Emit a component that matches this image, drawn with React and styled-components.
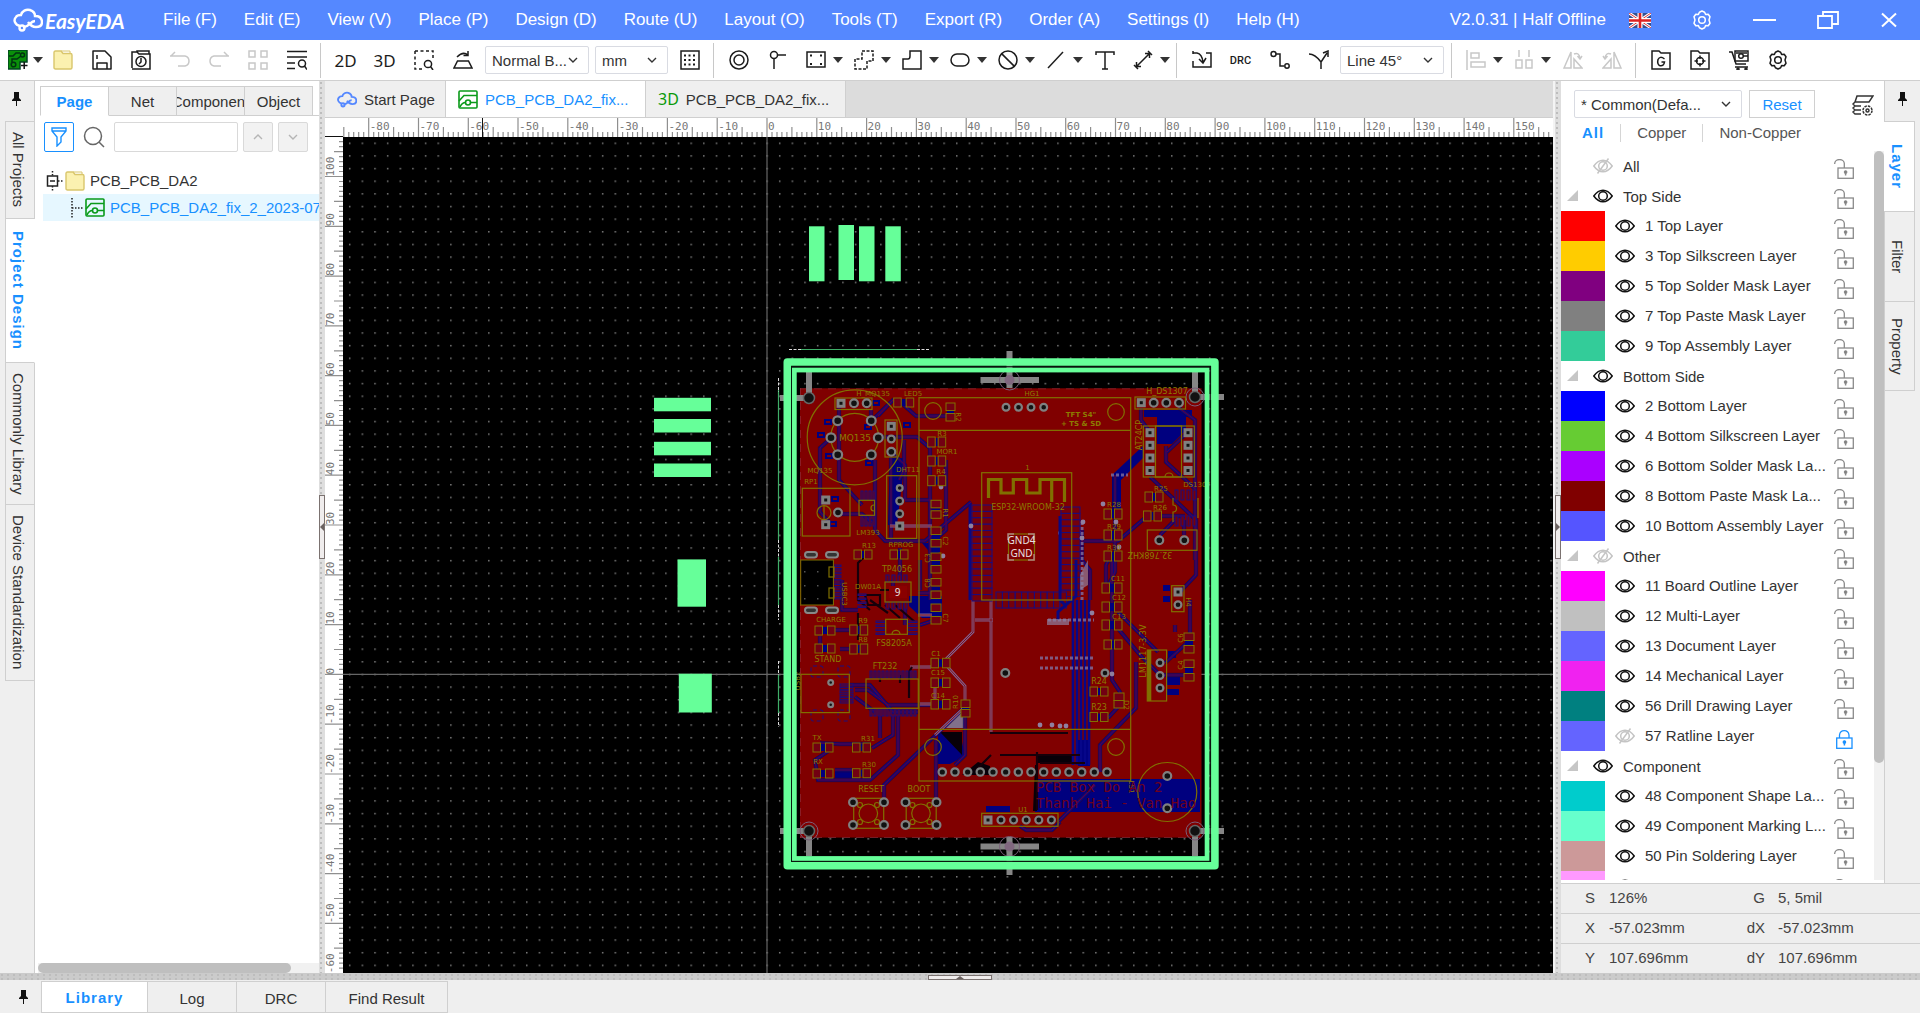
import React, { useLayoutEffect, useRef, useState } from "react";
import styled, { createGlobalStyle, css } from "styled-components";

const Global = createGlobalStyle`
  *, *::before, *::after { box-sizing: border-box; }
  body { margin: 0; overflow: hidden; background: #efefef; }
  body, button, input, select { font-family: "Liberation Sans", Arial, sans-serif; font-size: 15px; color: #333; }
  button { border: 0; padding: 0; background: none; }
  ul { list-style: none; margin: 0; padding: 0; }
`;

const blue = "#1890ff";
const line = "#cfcfcf";

/* ---------- shell ---------- */

const Shell = styled.div`
  display: grid;
  grid-template-rows: 40px 41px minmax(0, 1fr) 7px 33px;
  height: 100vh;
  background: #efefef;
`;

/* ---------- title bar ---------- */

const TitleBar = styled.header`
  display: flex;
  align-items: center;
  padding: 0 22px 0 13px;
  background: #5588ff;
  color: #fff;
`;

const Logo = styled.div`
  display: flex;
  align-items: center;
  gap: 2px;
  width: 137px;
  font: italic 700 21px Lato, sans-serif;
`;

const MenuNav = styled.nav`
  display: flex;
  flex: 1;
  gap: 1px;
`;

const MenuButton = styled.button`
  padding: 0 13px;
  color: #fff;
  font-size: 17px;
  line-height: 24px;
  white-space: nowrap;
`;

const Version = styled.span`
  font-size: 17px;
  white-space: nowrap;
`;

const WindowButtons = styled.div`
  display: flex;
  align-items: center;
  margin-left: 23px;
  gap: 41px;
`;

const WindowButton = styled.button`
  display: flex;
  color: #fff;
`;

/* ---------- toolbar ---------- */

const Toolbar = styled.div`
  display: flex;
  align-items: center;
  background: #fff;
  border-bottom: 1px solid ${line};
`;

const Tool = styled.button`
  display: flex;
  flex: none;
  align-items: center;
  justify-content: ${(p) => (p.$menu ? "flex-start" : "center")};
  gap: ${(p) => (p.$lead ? 5 : 7)}px;
  width: ${(p) => (p.$lead ? 43 : p.$menu ? 48 : 39)}px;
  height: 38px;
  padding-left: ${(p) => (p.$lead ? 8 : p.$menu ? 9 : 0)}px;
  color: ${(p) => (p.$off ? "#c8c8c8" : "#1c1c1c")};
`;

const ViewLabel = styled.span`
  font: 17px "Noto Sans", sans-serif;
`;

const CheckLabel = styled.span`
  font: 500 11px Roboto, sans-serif;
`;

const Divider = styled.span`
  flex: none;
  width: 1px;
  height: 35px;
  margin: 0 5px 0 4px;
  background: #c8c8c8;
`;

const SelectBox = styled.label`
  position: relative;
  display: flex;
  flex: none;
  align-items: center;
  width: ${(p) => p.$w}px;
  height: 28px;
  margin: 0 ${(p) => p.$gap || 0}px 0 ${(p) => p.$before || 0}px;
  border: 1px solid #d9dbe2;
  border-radius: 2px;
  background: #fff;
  select {
    width: 100%;
    height: 26px;
    padding: 0 20px 0 6px;
    border: 0;
    appearance: none;
    background: transparent;
  }
  svg {
    position: absolute;
    right: 10px;
    pointer-events: none;
  }
`;

/* ---------- workspace ---------- */

const Workspace = styled.main`
  display: grid;
  grid-template-columns: 35px 284px 6px minmax(0, 1fr) 8px 359px;
  min-height: 0;
`;

const SideStrip = styled.aside`
  display: flex;
  flex-direction: column;
  padding-left: ${(p) => (p.$right ? 0 : 5)}px;
  padding-right: ${(p) => (p.$right ? 5 : 0)}px;
  background: #efefef;
  border-right: ${(p) => (p.$right ? 0 : 1)}px solid ${line};
  border-left: ${(p) => (p.$right ? 1 : 0)}px solid ${line};
`;

const PinButton = styled.button`
  display: flex;
  align-items: center;
  justify-content: center;
  height: 40px;
  padding: ${(p) => (p.$right ? "0 0 4px 4px" : "0 6px 4px 0")};
`;

const SideTab = styled.button`
  writing-mode: vertical-rl;
  width: 30px;
  height: ${(p) => p.$h}px;
  padding-right: 4px;
  border: 1px solid ${line};
  border-top-width: ${(p) => (p.$first ? 1 : 0)}px;
  color: #333;
  ${(p) => p.$right && css`border-left: 0;`}
  ${(p) => p.$active && css`
    background: #fff;
    color: ${blue};
    font-weight: 700;
    letter-spacing: 1px;
    border-right-color: ${p.$right ? line : "#fff"};
    width: ${p.$right ? 31 : 30}px;
    margin-left: ${p.$right ? -1 : 0}px;
  `}
`;

const Panel = styled.section`
  display: flex;
  flex-direction: column;
  min-width: 0;
  min-height: 0;
  background: #fff;
`;

const PanelTabs = styled.div`
  display: flex;
  height: 30px;
  margin: 5px 0 0 5px;
  &::after { content: ""; flex: 1; border-bottom: 1px solid ${line}; }
`;

const PanelTab = styled.button`
  display: flex;
  align-items: center;
  justify-content: center;
  flex: none;
  width: ${(p) => (p.$active ? 69 : 68)}px;
  overflow: hidden;
  border: 1px solid ${line};
  border-left-width: ${(p) => (p.$active ? 1 : 0)}px;
  background: ${(p) => (p.$active ? "#fff" : "#efefef")};
  border-bottom-color: ${(p) => (p.$active ? "#fff" : line)};
  color: ${(p) => (p.$active ? blue : "#333")};
  font-weight: ${(p) => (p.$active ? 700 : 400)};
`;

const SearchRow = styled.div`
  display: flex;
  align-items: center;
  gap: 5px;
  padding: 6px 11px 0 9px;
`;

const SquareButton = styled.button`
  display: flex;
  align-items: center;
  justify-content: center;
  width: 30px;
  height: 30px;
  border: 1px solid ${(p) => (p.$on ? blue : "#d9d9d9")};
  border-radius: 2px;
  background: ${(p) => (p.$on ? "#fff" : "#f2f2f2")};
  color: ${(p) => (p.$on ? blue : "#b5b5b5")};
`;

const SearchLabel = styled.label`
  display: flex;
  flex: 1;
  min-width: 0;
  align-items: center;
  gap: 9px;
  padding-left: 4px;
  input {
    flex: 1;
    min-width: 0;
    height: 30px;
    border: 1px solid #d9d9d9;
    border-radius: 2px;
  }
`;

const Tree = styled.ul`
  flex: 1;
  margin: 15px 0 0 8px;
`;

const TreeRow = styled.li`
  display: flex;
  align-items: center;
  gap: 5px;
  height: 27px;
  padding-left: ${(p) => (p.$child ? 15 : 1)}px;
  overflow: hidden;
  white-space: nowrap;
  background: ${(p) => (p.$child ? "#e6f7ff" : "transparent")};
  color: ${(p) => (p.$child ? blue : "#333")};
  svg { flex: none; }
  svg:first-child { margin-right: -4px; }
`;

const HScroll = styled.div`
  height: 10px;
  margin-left: 3px;
  background: #f1f1f1;
  &::before {
    content: "";
    display: block;
    width: 90%;
    height: 10px;
    border-radius: 5px;
    background: #bfbfbf;
  }
`;

const Splitter = styled.div`
  display: flex;
  flex-direction: ${(p) => (p.$row ? "row" : "column")};
  align-items: flex-end;
  justify-content: center;
  border-left: ${(p) => (p.$edge ? 2 : 0)}px solid #f4f4f4;
  background: radial-gradient(circle at 2px 2px, #bdbdbd 1px, transparent 1px) 0 0 / ${(p) => (p.$row ? "6px 4px" : "8px 5px")} ${(p) => (p.$row ? "#cbcbcb" : "#dedede")};
`;

const Grip = styled.button`
  display: flex;
  align-items: center;
  justify-content: center;
  width: ${(p) => (p.$row ? 64 : 6)}px;
  height: ${(p) => (p.$row ? 5 : 64)}px;
  border: 1px solid #7b7270;
  background: #f0eded;
  color: #6b6260;
`;

/* ---------- documents ---------- */

const DocArea = styled.section`
  display: grid;
  grid-template-rows: 37px 19px minmax(0, 1fr);
  min-width: 0;
  min-height: 0;
  background: #fff;
`;

const DocTabs = styled.div`
  display: flex;
  background: #dcdcdc;
  border-bottom: 1px solid ${line};
`;

const DocTab = styled.button`
  display: flex;
  align-items: center;
  gap: 7px;
  width: ${(p) => p.$w}px;
  padding-left: 12px;
  border-right: 1px solid ${line};
  background: ${(p) => (p.$active ? "#fff" : "#efefef")};
  color: ${(p) => (p.$active ? blue : "#333")};
  white-space: nowrap;
`;

const GreenTag = styled.span`
  color: #0a9a0a;
  font: 16px "Noto Sans", sans-serif;
`;

const RulerSvg = styled.svg`
  display: block;
  width: 100%;
  height: 100%;
  min-width: 0;
  overflow: hidden;
  text { font: 11px "DejaVu Sans Mono", monospace; fill: #777; }
`;

const CanvasRow = styled.div`
  display: grid;
  grid-template-columns: 18px minmax(0, 1fr);
  min-height: 0;
`;

const Board = styled.svg`
  display: block;
  width: 100%;
  height: 100%;
  background: #000;
`;

/* ---------- layer manager ---------- */

const RightColumn = styled.div`
  display: grid;
  grid-template-columns: minmax(0, 1fr) 36px;
  grid-template-rows: minmax(0, 1fr) auto;
  min-height: 0;
`;

const PresetRow = styled.div`
  display: flex;
  align-items: center;
  padding: 9px 10px 0 13px;
`;

const ResetButton = styled.button`
  width: 66px;
  height: 28px;
  border: 1px solid #d0d0d0;
  color: ${blue};
`;

const ManagerButton = styled.button`
  display: flex;
  margin: 4px 0 0 auto;
`;

const FilterRow = styled.div`
  display: flex;
  align-items: center;
  height: 33px;
  padding: 0 0 3px 5px;
`;

const FilterButton = styled.button`
  padding: 0 16px;
  line-height: 18px;
  color: ${(p) => (p.$active ? blue : "#555")};
  font-weight: ${(p) => (p.$active ? 700 : 400)};
  letter-spacing: ${(p) => (p.$active ? "1px" : "normal")};
  & + & { border-left: 1px solid #d5d5d5; }
`;

const LayerScroll = styled.div`
  display: grid;
  grid-template-columns: minmax(0, 1fr) 10px;
  flex: 1;
  min-height: 0;
  margin-bottom: 3px;
  overflow: hidden;
`;

const LayerTrack = styled.div`
  background: #f1f1f1;
`;

const LayerThumb = styled.div`
  height: 84%;
  border-radius: 5px;
  background: #bfbfbf;
`;

const LayerList = styled.ul`
  min-height: 0;
`;

const LayerRow = styled.li`
  display: flex;
  align-items: center;
  height: 30px;
  padding-right: 20px;
  white-space: nowrap;
`;

const Swatch = styled.span`
  flex: none;
  width: 44px;
  height: 30px;
  margin-right: 10px;
  background: ${(p) => p.$c};
`;

const Fold = styled.button`
  display: flex;
  flex: none;
  width: 32px;
  height: 12px;
  padding-left: 6px;
`;

const IconButton = styled.button`
  display: flex;
  flex: none;
  padding-top: ${(p) => (p.$low ? 6 : 0)}px;
`;

const LayerName = styled.span`
  flex: 1;
  padding: 0 0 ${(p) => (p.$group ? 0 : 2)}px 10px;
`;

const Status = styled.dl`
  grid-column: 1 / -1;
  display: grid;
  grid-template-columns: 35px 134px 35px 1fr;
  grid-auto-rows: 30px;
  margin: 0;
  background: #eeeeee;
  color: #444;
`;

const StatusKey = styled.dt`
  padding-right: ${(p) => (p.$second ? 0 : 1)}px;
  border-top: 1px solid ${line};
  line-height: 28px;
  text-align: right;
`;

const StatusValue = styled.dd`
  margin: 0;
  padding-left: 13px;
  border-top: 1px solid ${line};
  line-height: 28px;
`;

/* ---------- bottom bar ---------- */

const BottomBar = styled.footer`
  display: flex;
  background: #efefef;
`;

const BottomPin = styled.button`
  display: flex;
  align-items: center;
  justify-content: center;
  width: 41px;
  padding-left: 5px;
`;

const BottomTab = styled.button`
  width: ${(p) => p.$w}px;
  border: 1px solid ${line};
  border-left-width: ${(p) => (p.$active ? 1 : 0)}px;
  margin-top: 1px;
  padding-top: ${(p) => (p.$active ? 0 : 2)}px;
  background: ${(p) => (p.$active ? "#fff" : "#efefef")};
  color: ${(p) => (p.$active ? blue : "#333")};
  font-weight: ${(p) => (p.$active ? 700 : 400)};
  letter-spacing: ${(p) => (p.$active ? "1px" : "normal")};
`;

/* ---------- icons ---------- */

const Icon = ({ w = 20, h = 20, vb, sw = 1.5, children }) => (
  <svg width={w} height={h} viewBox={vb || `0 0 ${w} ${h}`} fill="none" stroke="currentColor" strokeWidth={sw} aria-hidden="true">
    {children}
  </svg>
);

const Caret = () => (
  <Icon w={10} h={6}><path d="M0 0H10L5 6Z" fill="#333" stroke="none" /></Icon>
);
const Chevron = ({ up }) => (
  <Icon w={10} h={8} sw={1.4}><path d={up ? "M1 6L5 2L9 6" : "M1 2L5 6L9 2"} /></Icon>
);
const Pin = () => (
  <Icon w={9} h={14}><path d="M2 0H7V6L9 8V9H0V8L2 6ZM4 9H5V14H4Z" fill="#111" stroke="none" /></Icon>
);
const Cloud = ({ w, h, c, sw = 2.4 }) => (
  <svg width={w} height={h} viewBox="0 0 30 24" fill="none" stroke={c} strokeWidth={sw} aria-hidden="true">
    <path d="M7 18C2 17 0 12 3 9C4 7 6 7 8 7C9 3 13 1 17 2C20 3 22 5 22 8C26 8 29 10 29 14C29 17 27 19 23 19C19 19 17 17 15 14" />
    <path d="M10 19C16 20 17 13 22 13" />
    <circle cx="9" cy="20" r="2.5" />
  </svg>
);
const gear = "M10 1L12.6 2.2L13.6 4.4L16.2 4.2L18 6.8L17 10L18 13.2L16.2 15.8L13.6 15.6L12.6 17.8L10 19L7.4 17.8L6.4 15.6L3.8 15.8L2 13.2L3 10L2 6.8L3.8 4.2L6.4 4.4L7.4 2.2Z";
const Gear = () => <Icon><path d={gear} strokeLinejoin="round" /><circle cx="10" cy="10" r="3.3" /></Icon>;
const Folder = ({ w = 20, h = 20 }) => (
  <svg width={w} height={h} viewBox="0 0 20 20" aria-hidden="true">
    <path d="M1 2.500Q1 1 2.500 1H8L10 3.500H17.500Q19 3.500 19 5V17.500Q19 19 17.500 19H2.500Q1 19 1 17.500Z" fill="#fbf1b0" stroke="#d9c66c" strokeWidth="1.400" />
    <path d="M8 1H17V4" fill="none" stroke="#d9c66c" />
  </svg>
);
const BoardGlyph = () => (
  <svg width="20" height="19" viewBox="0 0 20 19" fill="none" stroke="#0a9a1a" strokeWidth="1.600" aria-hidden="true">
    <rect x="1" y="1" width="18" height="17" rx="1" />
    <path d="M1 11L6 5.500H19M12.500 12.500H19M2 17Q4 12.500 7.500 12.500" />
    <circle cx="10" cy="12.500" r="2.500" />
  </svg>
);
const Eye = ({ off }) => (
  <svg width="20" height="16" viewBox="0 0 20 16" fill="none" stroke={off ? "#c4c4c4" : "#111"} strokeWidth="1.500" aria-hidden="true">
    <path d="M0.800 8C4 3.500 7 2.200 10 2.200S16 3.500 19.200 8C16 12.500 13 13.800 10 13.800S4 12.500 0.800 8Z" />
    <circle cx="10" cy="8" r="4.300" />
    {off && <path d="M4.500 15.500L15.500 0.500" />}
  </svg>
);
const Lock = ({ on }) => (
  <svg width="20" height="20" viewBox="0 0 20 20" fill="none" stroke={on ? blue : "#8a8a8a"} strokeWidth="1.300" aria-hidden="true">
    {on ? <path d="M5.500 9V6A4.800 5 0 0 1 15 6V9" /> : <path d="M0.700 5V4.500A4.800 4 0 0 1 10.300 4.500V9" />}
    <rect x={on ? 2.7 : 4} y="9" width="15.300" height="10.300" />
    <path d={on ? "M10.400 12V16.500" : "M11.600 12V16.500"} strokeWidth="1.500" />
    <circle cx={on ? 10.4 : 11.6} cy="13" r="1.200" fill={on ? blue : "#777"} />
  </svg>
);

const glyphs = {
  newBoard: (
    <>
      <path d="M0 0H19V12H12V19H0Z" fill="#0a8f0a" stroke="#042" />
      <path d="M1 6H5L8 3H12M4 12V9H9L13 6" stroke="#031" />
      <circle cx="14.500" cy="5" r="2" stroke="#031" /><circle cx="5.500" cy="14.500" r="2.300" stroke="#031" />
      <path d="M13 15.500H19.500M16.200 12V19" stroke="#111" />
    </>
  ),
  save: <path d="M1 1H13L19 7V19H1ZM5 19V13H15V19M5 5V9" strokeLinejoin="round" />,
  history: <><path d="M1 18V2H6L8 4H19V19H1M6 2V1H18V4" /><circle cx="10" cy="11.500" r="5" /><path d="M10 8V12L8 14" /></>,
  undo: <path d="M0 6H15Q19 7 19 11T15 16H8M5 2L1 6" />,
  redo: <path d="M20 6H5Q1 7 1 11T5 16H12M15 2L19 6" />,
  tiles: <path d="M1 1H7V7H1ZM13 1H19V7H13ZM1 13H7V19H1ZM13 13H19V19H13Z" />,
  find: <><path d="M0 1.500H20M0 7H20M0 13H8M0 18.500H8" strokeWidth="1.700" /><circle cx="15" cy="13.500" r="3.500" /><path d="M17.500 16L20 19.500" /></>,
  zoomArea: <><path d="M1 1H19V9M1 1V19H9" strokeDasharray="3 2.500" /><circle cx="14" cy="14" r="3.600" /><path d="M16.500 16.500L19 20" /></>,
  flipBoard: <path d="M1 18H19L15.500 11H4.500ZM4 7Q10 1 15 5M15 1V5.500H10.500" />,
  gridDots: <><rect x="1" y="1" width="18" height="18" /><path d="M4 5.500H16M4 10H16M4 14.500H16" strokeDasharray="2 2.500" strokeWidth="2" /></>,
  pad: <><circle cx="10" cy="10" r="9" /><circle cx="10" cy="10" r="5" /></>,
  via: <><circle cx="6" cy="5" r="3.500" /><path d="M9.500 5H18M6 9V19" /></>,
  rectPad: <><rect x="1" y="2" width="18" height="15" /><path d="M4 5.500H6M14 5.500H16M4 14H6M14 14H16" strokeWidth="2.200" /></>,
  region: <path d="M8 1H19V11H13V19H1V9H8Z" strokeDasharray="3 1.500" />,
  polygon: <path d="M8 1H19V19H1V9H6Q8 9 8 6Z" />,
  slot: <rect x="1" y="4" width="18" height="12" rx="6" />,
  keepOut: <><circle cx="10" cy="10" r="9" /><path d="M3.600 3.600L16.400 16.400" /></>,
  stroke: <path d="M2 18L17 2" />,
  text: <path d="M1 5V2H19V5M10 2V19M7 19H13" />,
  measure: <path d="M3 17L17 3M12 3.500H16.500V8M3.500 12V16.500H8M15 1L19 5M1 15L5 19" />,
  place: <path d="M1 1V4M1 11V17H19V3H14M1 3H5Q10 4 11 12M7 9L11 13L14 8" />,
  route: <><circle cx="3.500" cy="4" r="2.500" /><path d="M6 4H10V16H14" /><circle cx="17" cy="16" r="2.200" /></>,
  branch: <path d="M0 4Q6 4 12 12V19M12 12L18 3M14 3L19 1V7" />,
  align: <path d="M1 0V20M5 3H13V8H5ZM5 12H19V17H5Z" />,
  distribute: <path d="M5 0V7M15 0V7M2 10H8V18H2ZM12 10H18V18H12ZM0 18.500H0" />,
  flipLeft: <path d="M8 2V18H1ZM11 18H19L11 9ZM11 4Q16 2 17 8M14.500 6L17 9L19 6" />,
  flipRight: <path d="M12 2V18H19ZM9 18H1L9 9ZM9 4Q4 2 3 8M5.500 6L3 9L1 6" />,
  gerber: <><path d="M1 19V1H8L10 3H19V19Z" /><path d="M13.500 9Q9 5.500 7 9.500Q6 14 8.500 15.500Q13 16.500 13.500 12H10.500" /></>,
  drill: <><path d="M1 19V1H8L10 3H19V19Z" /><circle cx="10" cy="11" r="3.500" /><path d="M10 5.500V9M10 13V16.500M4.500 11H8M12 11H15.500" /></>,
  cart: <><path d="M0 2H3L7 14H17M6 17H19" /><rect x="6" y="1" width="13" height="10" /><circle cx="12" cy="6" r="2.300" /><path d="M14 6H19M7 3H18" /><circle cx="9" cy="19" r="1" /><circle cx="17" cy="19" r="1" /></>,
};

const G = ({ n }) => <Icon>{glyphs[n]}</Icon>;

/* ---------- rulers ---------- */

const UNIT = 4.979;
const ORIGIN = { x: 424, y: 537.4 };

function useBox() {
  const ref = useRef(null);
  const [box, setBox] = useState({ width: 0, height: 0 });
  useLayoutEffect(() => {
    const measure = () => {
      const r = ref.current.getBoundingClientRect();
      setBox({ width: r.width, height: r.height });
    };
    measure();
    window.addEventListener("resize", measure);
    return () => window.removeEventListener("resize", measure);
  }, []);
  return [ref, box];
}

function TopRuler() {
  const [ref, { width }] = useBox();
  const ticks = [];
  const labels = [];
  const last = Math.floor((width - 18 - ORIGIN.x) / UNIT);
  for (let i = -85; i <= last; i++) {
    const x = 18 + ORIGIN.x + i * UNIT;
    const top = i % 10 === 0 ? 0 : i % 5 === 0 ? 9 : 14;
    ticks.push(`M${x.toFixed(1)} ${top}V19`);
    if (i % 10 === 0 && x + 22 < width) labels.push(<text key={i} x={x + 1} y="12">{i}</text>);
  }
  return (
    <RulerSvg ref={ref}>
      <path d={ticks.join("")} stroke="#8f8f8f" strokeWidth="1.200" />
      {labels}
      <path d="M157.500 0V19M0 18.500H18" stroke="#111" />
    </RulerSvg>
  );
}

function SideRuler() {
  const [ref, { height }] = useBox();
  const ticks = [];
  const labels = [];
  const first = Math.ceil((ORIGIN.y - height) / UNIT);
  for (let i = first; i < 108; i++) {
    const y = ORIGIN.y - i * UNIT;
    const left = i % 10 === 0 ? 0 : i % 5 === 0 ? 9 : 14;
    ticks.push(`M${left} ${y.toFixed(1)}H18`);
    if (i % 10 === 0) labels.push(<text key={i} transform={`translate(9 ${y}) rotate(-90)`}>{i}</text>);
  }
  if (first % 10 !== 0 && first % 10 > -10) {
    const next = Math.floor(first / 10) * 10;
    const y = ORIGIN.y - next * UNIT;
    if (y - height < 3) labels.push(<text key={next} transform={`translate(9 ${y}) rotate(-90)`}>{next}</text>);
  }
  return (
    <RulerSvg ref={ref}>
      <path d={ticks.join("")} stroke="#8f8f8f" strokeWidth="1.200" />
      {labels}
    </RulerSvg>
  );
}

/* ---------- circuit board ---------- */

const SILK = "#807000";
const COPPER = "#00007f";

const roundPads = [
  [837.7, 420.7, 5.5], [871.3, 420.7, 5.5], [831, 437.7, 5.5], [878.3, 437.7, 5.5], [837.7, 454.7, 5.5], [871.3, 454.7, 5.5],
  [854, 403.3, 5], [866.7, 403.3, 5], [891.3, 439, 4.5], [891.3, 451.7, 5],
  [899.7, 488, 4], [899.7, 501, 4.5], [899.7, 513.7, 4.5], [838, 512.5, 5],
  [1006, 407.3, 4.5], [1018.5, 407.3, 4.5], [1031, 407.3, 4.5], [1043.7, 407.3, 4.5],
  [1153.7, 402.7, 5], [1166.3, 402.7, 5], [1179, 402.7, 5],
  [1159.3, 540.3, 5], [1184.3, 540.3, 5], [1178, 604.7, 4.5],
  [1160, 662.7, 4.5], [1160, 675.5, 4.5], [1160, 688, 4.5],
  [1005.3, 673, 5], [1105, 673, 4.5], [830.7, 682.5, 3.5], [830.7, 704.7, 3.5],
  [1167.3, 776, 5], [1167.3, 808.3, 5],
  ...[853, 884, 905.5, 936.5].flatMap((x) => [[x, 802.3, 5], [x, 825, 5]]),
  ...Array.from({ length: 14 }, (_, i) => [942.3 + i * 12.67, 772, 4.8]),
  ...Array.from({ length: 5 }, (_, i) => [1001 + i * 12.6, 820, 4.6]),
];

const squarePads = [
  [841, 403.3], [891.3, 426.3], [825.7, 500], [825.7, 524.7], [899.7, 526], [1141.3, 402.7], [988, 820], [1178, 592],
  ...[432.7, 445.3, 458, 470.5].flatMap((y) => [[1150, y], [1188, y]]),
];

/* x, y, width, height of two-terminal parts */
const chips = [
  [893.7, 398, 20, 9], [927.7, 437, 18, 10], [927.7, 456, 18, 10], [927.7, 475.7, 18, 10], [854, 550, 18, 9], [890, 550, 18, 9],
  [815, 626, 20, 9], [849.7, 625, 18, 10], [815, 644, 20, 9], [849.7, 644, 18, 10],
  [931, 658.3, 19, 9.5], [931, 678, 19, 9.5], [931, 699.5, 19, 9.5],
  [813, 743, 20, 9], [852.5, 743, 18, 9], [813, 769, 20, 9], [852.5, 768.7, 18, 9],
  [1145, 492, 18, 10], [1143.5, 511, 18, 10], [1104, 509, 18, 10], [1104, 530, 18, 10], [1104, 551, 18, 10],
  [1102, 583, 20, 10], [1102, 602, 20, 10], [1102, 620, 20, 10], [1104, 640, 18, 9],
  [1090, 687, 18, 9], [1090, 712.5, 18, 9],
  [946, 403, 9, 18], [931, 500.3, 10, 18], [931, 527, 10, 20], [931, 553, 10, 20], [931, 578.5, 10, 20], [931, 604, 10, 20],
  [961, 700, 9, 17], [1184, 633, 10, 20], [1184, 660, 10, 21], [1114, 693, 10, 15],
];

const outlines = [
  [835, 398, 37, 11.5], [885, 420, 12, 37], [919, 397.7, 211.7, 383.3], [981.7, 472.7, 90, 127.3], [886.7, 475.7, 30, 62.7],
  [802.3, 488.3, 47.7, 47.7], [859, 500.3, 15.5, 15], [885, 582, 26, 20], [1135, 397, 50.5, 12], [1143.3, 426, 51, 51],
  [1155.5, 426, 26, 51], [1147.3, 530, 49.7, 20.3], [1171.7, 585.7, 12.3, 26], [885.7, 619.3, 21.7, 15], [866, 679, 52.3, 29.3],
  [801, 674.3, 48.3, 38.3], [853.7, 798.3, 30, 30], [906.2, 798.3, 30, 30], [981.7, 813.3, 76.3, 13], [1147.3, 650, 19.3, 51],
  [1008.5, 534, 26, 26], [829, 567, 5, 10], [829, 588, 5, 10],
];

const rings = [
  [854.7, 437.3, 47.5], [854.7, 437.3, 24], [933, 411, 8.3], [1116, 412, 8.3], [933, 747, 8.3], [1116, 747, 8.3],
  [824, 512.7, 7], [868.3, 813.3, 9.3], [921, 813.3, 9.3], [1167.3, 792, 29.5],
  ...[860, 877, 912.5, 929.5].flatMap((x) => [[x, 805, 2.5], [x, 822, 2.5]]),
];

/* text, centre x, baseline y, size, rotation, bold */
const silkTexts = [
  ["H_MQ135", 873, 396, 7], ["LED5", 913, 396, 7], ["MQ135", 855, 441, 9], ["MQ135", 820, 473, 7], ["RP1", 811, 484, 7],
  ["DHT11", 908, 472, 7], ["R3", 942, 436, 7], ["MOR1", 947, 454, 7], ["R4", 941, 474, 7], ["LM393", 868, 535, 7],
  ["R13", 869, 548, 7], ["RPROG", 901, 547, 7], ["TP4056", 897, 572, 8], ["DW01A", 868, 589, 7], ["CHARGE", 831, 622, 7],
  ["R9", 863, 623, 7], ["R8", 863, 642, 7], ["STAND", 828, 662, 8], ["FS8205A", 894, 646, 8], ["FT232", 885, 669, 8],
  ["C1", 936, 656, 7], ["C15", 938, 675, 7], ["C14", 938, 698, 7], ["TX", 817, 740, 7], ["RX", 818, 764, 7],
  ["R31", 868, 741, 7], ["R30", 869, 767, 7], ["RESET", 871, 792, 8], ["BOOT", 919, 792, 8], ["HG1", 1032, 396, 7],
  ["TFT S4\"", 1081, 417, 7, 0, 1], ["+ TS & SD", 1081, 426, 7, 0, 1], ["1", 1027.5, 470, 7], ["ESP32-WROOM-32", 1028, 510, 8],
  ["H_DS1307", 1167, 394, 8], ["DS1307", 1197, 487, 7], ["R25", 1161, 491, 7], ["R26", 1160, 510, 7], ["R28", 1114, 507, 7],
  ["R29", 1114, 529, 7], ["R30", 1114, 550, 7], ["C11", 1118, 581, 7], ["C12", 1119, 600, 7], ["C13", 1119, 619, 7],
  ["R24", 1099, 684, 8], ["R23", 1099, 710, 8], ["U1", 1023, 812, 7], ["32.768KHZ", 1150, 552, 8, 180],
  ["AT24CP", 1142, 435, 8, -90], ["LM1117-3.3V", 1146, 651, 8, -90], ["C6", 1183, 638, 7, -90], ["C4", 1183, 665, 7, -90],
  ["USBC3", 842, 594, 7, 90], ["R2", 956, 417, 7, 90], ["R1", 943, 513, 7, 90], ["C2", 943, 541, 7, 90], ["C3", 930, 558, 7, -90],
  ["C8", 930, 583, 7, -90], ["C7", 943, 618, 7, 90], ["R10", 958, 702, 7, -90], ["D2", 1124, 705, 7, 90], ["H4", 1186, 602, 7, 90],
  ["LS1", 1129, 787, 7, 90], ["USB2", 800, 681, 7, -90],
];

const traces = [
  "M839 408V480L862 505M871 410V420M831 438L820 448V512L832 525M875 460V530L885 541H925L971 502",
  "M878 416L893 400H898L916 416H948M871 421L893 400M878 437H917L930 448V600M946 460V530L935 540",
  "M891 457V540M905 500H932M904 440V470L899 480M838 514H862L872 522M891 452L905 465V500",
  "M1141 408V420L1150 432M1179 408L1195 420V560M1166 446V462L1188 482L1196 490M1188 432L1167 452",
  "M1150 477L1175 500L1196 520V575L1180 592M1162 516H1185M1160 535L1175 520M1184 535V520M1082 541H1118L1145 518",
  "M1115 475V572L1106 590V565L1112 552M1112 560V680L1120 692V705L1108 718M1115 625L1140 655L1160 675H1184M1165 663L1190 640V600",
  "M1118 612L1158 652M1136 662V708L1100 745V772M1062 520V600M1082 530V560L1090 570V600",
  "M825 630H850M820 636V645M840 649H850M842 580V610H858M855 690H868L888 705H930M850 685H870L893 712H918",
  "M855 697L875 712M893 716V735L872 748M898 716V755L870 780H818L815 760L830 750M880 716V738M870 744H840L820 743M835 770H852",
  "M936 740V800M884 800V785L968 704M965 717V755L955 765M1058 822L1095 785M1020 826L1026 830H1052L1060 822",
  "M900 548V580M920 560V590M893 580V590M918 593H935M1175 625V632M905 603V625M920 625L935 620",
];

/* narrow vertical bus beside the module */
const bus = [1073, 1077, 1081, 1085, 1089];

const paleTraces = [
  "M973 600V632L945 660M945 664L965 686V700M991 600V732M918 615H933M910 667H931M935 685V700M920 704H931",
  "M968 704L935 735M890 526H932M975 620H993",
];
const dottedTraces = "M1040 658H1094M1040 668H1094M1048 620H1094M1058 533H1082M1111 475H1128M1060 573H1066M1082 522V600";

const darkTraces = [
  "M868 553L858 563V600L870 610M865 595H880V605H868ZM880 590H890M885 605L900 618M895 605L915 622M858 613V640M888 613L870 600",
  "M912 667L909 672V698M990 733H1068M1000 755H1080M1037 752V810M1040 763H1085M991 755L975 771M880 682V678M900 683V675",
];

function Comb({ x, y, n, step, w, h, vertical }) {
  return Array.from({ length: n }, (_, i) => (
    <rect key={i} x={vertical ? x : x + i * step} y={vertical ? y + i * step : y} width={w} height={h} />
  ));
}

function BoardDrawing() {
  return (
    <Board role="img" aria-label="PCB layout">
      <defs>
        <pattern id="grid" x={ORIGIN.x - 0.7} y={ORIGIN.y - 0.7} width="12.647" height="12.647" patternUnits="userSpaceOnUse">
          <rect width="1.500" height="1.500" fill="#7c7c7c" />
        </pattern>
      </defs>
      <rect width="100%" height="100%" fill="url(#grid)" />
      <path d={`M${ORIGIN.x} 0V4000M0 ${ORIGIN.y}H6000`} stroke="#666" strokeWidth="1.200" />
      <g transform="translate(-343 -137)" fill="none">
        <g fill="#66ff99">
          {[[809, 226.3], [838.5, 225], [859, 226.3], [885.3, 226.3]].map(([x, y]) => <rect key={x} x={x} y={y} width="15.500" height="55" />)}
          {[397.8, 419, 441.8, 463.5].map((y) => <rect key={y} x="654" y={y} width="57" height="13.500" />)}
          <rect x="677.500" y="559.400" width="28.500" height="47.300" />
          <rect x="678.800" y="673.700" width="33" height="38.800" />
        </g>
        <path d="M800 349.500H917M778.500 390V540M778.500 557V605M778.500 675V713" stroke="#3fae68" strokeWidth="1.200" />
        <path d="M789 349.500H802M917 349.500H930M778.500 378V392M778.500 540V557M778.500 605V620M778.500 661V675M778.500 713V727" stroke="#ddd" strokeDasharray="3 1.500" />

        <rect x="800" y="388.300" width="401.500" height="449.300" fill="#800000" />
        <path d="M800 388.800H1201M800.500 388V838M800 837.500H1201" stroke="#903040" strokeDasharray="8 6" opacity="0.600" />

        <g stroke="#858585" strokeWidth="6">
          <path d="M809 372V398H780M1195 372V397H1224M809 856V831H780M1195 856V831H1224M1009.500 351V388M980.500 380H1039M1009.500 837V875M980.500 846.500H1039" />
        </g>
        <g stroke="#7a607a"><circle cx="1009.500" cy="380" r="10" /><circle cx="1009.500" cy="846.500" r="10" /><circle cx="809" cy="831" r="9" /><circle cx="1195" cy="397" r="9" /><circle cx="1195" cy="831" r="9" /></g>
        <g fill="#80677f"><circle cx="1009.500" cy="380" r="5" /><circle cx="1009.500" cy="846.500" r="5" /></g>
        <g fill="#111" stroke="#666" strokeWidth="1.500">
          {[[809, 398], [1195, 397], [809, 831], [1195, 831]].map(([x, y]) => <circle key={`${x}${y}`} cx={x} cy={y} r="5.500" />)}
        </g>

        <g fill={COPPER}>
          <path d="M890 458H903V475L897 525H888ZM909 596H942V618H922L909 606ZM938 732H960L965 756L950 764H938ZM1157 410H1186V430L1172 444H1157ZM1143 446V458L1121 480V518H1112V475ZM922 543H940V552L933 556Z" />
          <rect x="1035" y="779" width="165" height="33" />
          <rect x="835" y="769" width="20" height="9" />
          <rect x="1078" y="740" width="12" height="26" />
          <rect x="1144" y="410" width="48" height="7" />
          <rect x="986" y="806" width="24" height="6" />
          <rect x="1167" y="677" width="13" height="8" /><rect x="1167" y="689" width="12" height="6" /><rect x="1168" y="651" width="8" height="7" />
          <rect x="1163" y="585" width="7" height="6" /><rect x="1163" y="596" width="7" height="6" />
        </g>
        <path d="M945 728L965 706V728Z" fill="#81708a" />
        <path d="M940 732H962V755ZM1038 754H1072V763H1038ZM978 762L990 766V775H962ZM1035 765H1037V811H1033Z" fill="#080008" />

        <g stroke="#2c0030" strokeWidth="4.400" opacity="0.600">{traces.map((d) => <path key={d} d={d} />)}</g>
        <g stroke="#0a0880" strokeWidth="3">{traces.map((d) => <path key={d} d={d} />)}</g>
        <g stroke="#6a0030" strokeWidth="1">{traces.map((d) => <path key={d} d={d} />)}</g>
        <g stroke="#06068a" strokeWidth="2.600">{bus.map((x) => <path key={x} d={`M${x} 600V765`} />)}</g>
        <g stroke="#806090" strokeWidth="2.800">{paleTraces.map((d) => <path key={d} d={d} />)}</g>
        <g stroke="#800000" strokeWidth="0.800">{paleTraces.map((d) => <path key={d} d={d} />)}</g>
        <path d={dottedTraces} stroke="#8070a0" strokeWidth="3" strokeDasharray="3 2" opacity="0.800" />
        <g stroke="#16000a" strokeWidth="2.200">{darkTraces.map((d) => <path key={d} d={d} />)}</g>

        <g fill="#74000c" stroke="#180c80" strokeWidth="1">
          <Comb vertical x={972} y={505} n={15} step={6.4} w={20} h={6.4} />
          <Comb vertical x={1061} y={507} n={14} step={6.4} w={19} h={6.4} />
          <Comb x={996} y={592} n={11} step={6.4} w={6.4} h={16} />
          <Comb x={861} y={491} n={4} step={4} w={2} h={9} />
          <Comb x={861} y={516} n={4} step={4} w={2} h={10} />
          <Comb x={870} y={671} n={12} step={4} w={2} h={7} />
          <Comb x={870} y={709} n={12} step={4} w={2} h={7} />
          <Comb x={886} y={575} n={4} step={6} w={3} h={7} />
          <Comb x={886} y={602} n={4} step={6} w={3} h={7} />
          <Comb vertical x={840} y={684} n={6} step={3.4} w={13} h={2} />
          <Comb vertical x={832} y={565} n={10} step={3.6} w={9} h={1.5} />
          <Comb vertical x={876} y={621} n={4} step={4} w={9} h={1.5} />
          <Comb vertical x={908} y={621} n={4} step={4} w={9} h={1.5} />
          <Comb vertical x={858} y={594} n={4} step={4} w={8} h={1.5} />
          <Comb x={1175} y={490} n={4} step={6} w={3} h={10} />
          <Comb x={1175} y={516} n={4} step={6} w={3} h={10} />
        </g>
        <path d="M970 504V600M1060 516V600L1066 606M1058 620V612L1076 596V560" stroke="#0a0880" strokeWidth="3" />
        <g stroke="#1a0f80" strokeDasharray="4 3">
          {[[811, 666], [838, 666], [811, 710], [838, 710]].map(([x, y]) => <rect key={`${x}${y}`} x={x} y={y} width="12" height="11" rx="2" />)}
        </g>
        <g fill="#800000" stroke={COPPER} strokeWidth="2">
          {[[873, 401], [825, 420], [818, 433], [826, 454], [865, 425], [866, 461], [904, 423], [832, 497], [830, 522]].map(([x, y]) => <rect key={`${x}${y}`} x={x} y={y} width="6" height="4" />)}
        </g>
        <g fill="#8f80a0">
          {[[1083, 522], [1103, 504], [1116, 522], [1119, 547], [971, 526], [941, 487], [943, 556], [1082, 538], [1092, 613], [1040, 725], [1052, 725], [1060, 726], [1066, 726], [1112, 674]].map(([x, y]) => <circle key={`${x}${y}`} cx={x} cy={y} r="2.400" />)}
          <path d="M1047 619H1069V625H1047ZM1080 575L1088 560V585L1080 590Z" opacity="0.700" />
        </g>

        <rect x="800.700" y="560" width="32.700" height="45" fill="#000" stroke={SILK} />
        <g fill="#555">{[571, 585, 598].flatMap((y) => [804, 817].map((x) => <rect key={`${x}${y}`} x={x} y={y} width="1.500" height="1.500" />))}</g>
        <g fill="#333" stroke="#888" strokeWidth="2">
          {[[805, 552], [826, 552], [805, 607.5], [826, 607.5]].map(([x, y]) => <rect key={`${x}${y}`} x={x} y={y} width="12" height="5.500" rx="2.700" />)}
        </g>

        <g stroke={SILK} strokeWidth="1.200">
          {outlines.map(([x, y, w, h]) => <rect key={`${x}-${y}`} x={x} y={y} width={w} height={h} />)}
          {rings.map(([x, y, r]) => <circle key={`${x}-${y}-${r}`} cx={x} cy={y} r={r} />)}
          <path d="M919 430.300H1130.700M919 729.300H1130.700M824 506V520M892 634.300A4 4 0 0 1 900 634.300M1165 477A4 4 0 0 1 1173 477M874 505A3 3 0 0 0 874 511M1173 498V505A3 3 0 0 1 1173 512V522M1198 498V518" />
          <path d="M1149.300 650V701" strokeWidth="4" />
          <path d="M988.500 498V479.500H1001V493H1013.300V479.500H1026.700V493H1040V479.500H1064.500V502M1051.700 479.500V502" strokeWidth="3.200" />
        </g>
        {chips.map(([x, y, w, h]) => {
          const wide = w > h;
          const pw = wide ? 7.5 : w;
          const ph = wide ? h : 7.5;
          return (
            <g key={`${x}-${y}`}>
              <rect x={x + (wide ? 8 : 1)} y={y + (wide ? 1 : 8)} width={wide ? w - 16 : w - 2} height={wide ? h - 2 : h - 16} fill={COPPER} />
              <g fill="#720012" stroke={SILK}>
                <rect x={x} y={y} width={pw} height={ph} />
                <rect x={x + w - pw} y={y + h - ph} width={pw} height={ph} />
              </g>
            </g>
          );
        })}
        <g fill="#111" stroke="#808080" strokeWidth="2.200">
          {roundPads.map(([x, y, r]) => <circle key={`${x}-${y}`} cx={x} cy={y} r={r - 1.1} />)}
        </g>
        <g fill="#111" stroke="#808080" strokeWidth="3">
          {squarePads.map(([x, y]) => <rect key={`${x}-${y}`} x={x - 3} y={y - 3} width="6" height="6" />)}
        </g>

        <g fill="#8c7c00" fontFamily="DejaVu Sans, sans-serif" textAnchor="middle">
          {silkTexts.map(([t, x, y, s, r = 0, b]) => (
            <text key={`${t}-${x}-${y}`} transform={`translate(${x} ${y}) rotate(${r})`} fontSize={s} fontWeight={b ? 700 : 400}>{t}</text>
          ))}
        </g>
        <g fill="#6c0020" fontFamily="DejaVu Sans Mono, monospace" fontSize="14">
          <text x="1036" y="792">PCB Box Do An 2</text>
          <text x="1036" y="808">Thanh Hai - Van Hao</text>
        </g>
        <rect x="889" y="586" width="18" height="12" fill="#8a0000" />
        <g stroke="#b08080" strokeWidth="1.500"><path d="M1008 540V534H1014M1028 534H1034V540M1034 554V560H1028M1014 560H1008V554" /></g>
        <g fill="#e8e0e0" fontFamily="Noto Sans, sans-serif" fontSize="10" textAnchor="middle">
          <text x="897.500" y="596">9</text><text x="1021.500" y="544">GND4</text><text x="1021.500" y="557">GND</text>
        </g>

        <g stroke="#66ff99" strokeLinejoin="round">
          <rect x="787.300" y="362" width="427.600" height="503.700" strokeWidth="7.600" />
          <rect x="794.300" y="370" width="412.800" height="488.500" strokeWidth="4.800" strokeLinejoin="miter" />
        </g>
        <rect x="791.500" y="366.700" width="418.800" height="494.700" stroke="#0a1a10" />
      </g>
    </Board>
  );
}

/* ---------- data ---------- */

const menus = ["File (F)", "Edit (E)", "View (V)", "Place (P)", "Design (D)", "Route (U)", "Layout (O)", "Tools (T)", "Export (R)", "Order (A)", "Settings (I)", "Help (H)"];

const layers = [
  { name: "All", off: true, group: true, root: true },
  { name: "Top Side", group: true },
  { name: "1 Top Layer", c: "#ff0000" },
  { name: "3 Top Silkscreen Layer", c: "#ffcc00" },
  { name: "5 Top Solder Mask Layer", c: "#800080" },
  { name: "7 Top Paste Mask Layer", c: "#808080" },
  { name: "9 Top Assembly Layer", c: "#33cc99" },
  { name: "Bottom Side", group: true },
  { name: "2 Bottom Layer", c: "#0000ff" },
  { name: "4 Bottom Silkscreen Layer", c: "#66cc33" },
  { name: "6 Bottom Solder Mask La...", c: "#aa00ff" },
  { name: "8 Bottom Paste Mask La...", c: "#800000" },
  { name: "10 Bottom Assembly Layer", c: "#5555ff" },
  { name: "Other", group: true, off: true },
  { name: "11 Board Outline Layer", c: "#ff00ff" },
  { name: "12 Multi-Layer", c: "#c0c0c0" },
  { name: "13 Document Layer", c: "#6464ff" },
  { name: "14 Mechanical Layer", c: "#f022f0" },
  { name: "56 Drill Drawing Layer", c: "#008080" },
  { name: "57 Ratline Layer", c: "#6464ff", off: true, locked: true },
  { name: "Component", group: true },
  { name: "48 Component Shape La...", c: "#00cccc" },
  { name: "49 Component Marking L...", c: "#66ffcc" },
  { name: "50 Pin Soldering Layer", c: "#cc9999" },
  { name: "51 Pin Floating Layer", c: "#ff99ff" },
];

const status = [["S", "126%"], ["G", "5, 5mil"], ["X", "-57.023mm"], ["dX", "-57.023mm"], ["Y", "107.696mm"], ["dY", "107.696mm"]];

const ToolIcon = ({ n, off, menu, lead }) => (
  <Tool $off={off} $menu={menu} $lead={lead} aria-label={n}><G n={n} />{menu && <Caret />}</Tool>
);

const Dropdown = ({ label, value, ...rest }) => (
  <SelectBox {...rest}>
    <select aria-label={label} defaultValue={value}><option>{value}</option></select>
    <Chevron />
  </SelectBox>
);

export default function App() {
  return (
    <>
      <Global />
      <Shell>
        <TitleBar>
          <Logo><Cloud w={30} h={24} c="#fff" />EasyEDA</Logo>
          <MenuNav>{menus.map((m) => <MenuButton key={m}>{m}</MenuButton>)}</MenuNav>
          <Version>V2.0.31 | Half Offline</Version>
          <WindowButtons>
            <WindowButton aria-label="Language">
              <svg width="22" height="15" viewBox="0 0 22 15" aria-hidden="true">
                <rect width="22" height="15" fill="#34508f" />
                <path d="M0 0L22 15M22 0L0 15" stroke="#fff" strokeWidth="3" />
                <path d="M0 0L22 15M22 0L0 15" stroke="#d33" strokeWidth="1" />
                <path d="M11 0V15M0 7.500H22" stroke="#fff" strokeWidth="5" />
                <path d="M11 0V15M0 7.500H22" stroke="#d22" strokeWidth="2.600" />
              </svg>
            </WindowButton>
            <WindowButton aria-label="Preferences"><Gear /></WindowButton>
            <WindowButton aria-label="Minimize"><Icon w={23} h={20}><path d="M0 10H23" strokeWidth="2" /></Icon></WindowButton>
            <WindowButton aria-label="Restore"><Icon w={22} h={20}><path d="M1 6H15V18H1ZM6 6V2H21V14H15" strokeWidth="1.800" /></Icon></WindowButton>
            <WindowButton aria-label="Close"><Icon w={18} h={20}><path d="M2 3.500L16 16.500M16 3.500L2 16.500" strokeWidth="2" /></Icon></WindowButton>
          </WindowButtons>
        </TitleBar>

        <Toolbar role="toolbar">
          <ToolIcon n="newBoard" menu lead />
          <Tool aria-label="Open"><Folder /></Tool>
          <ToolIcon n="save" /><ToolIcon n="history" />
          <ToolIcon n="undo" off /><ToolIcon n="redo" off /><ToolIcon n="tiles" off /><ToolIcon n="find" />
          <Divider />
          <Tool><ViewLabel>2D</ViewLabel></Tool>
          <Tool><ViewLabel>3D</ViewLabel></Tool>
          <ToolIcon n="zoomArea" /><ToolIcon n="flipBoard" />
          <Dropdown label="Brightness" value="Normal B..." $w={104} $before={3} $gap={6} />
          <Dropdown label="Unit" value="mm" $w={73} $gap={2} />
          <ToolIcon n="gridDots" />
          <Divider />
          <ToolIcon n="pad" /><ToolIcon n="via" />
          <ToolIcon n="rectPad" menu /><ToolIcon n="region" menu /><ToolIcon n="polygon" menu /><ToolIcon n="slot" menu />
          <ToolIcon n="keepOut" menu /><ToolIcon n="stroke" menu /><ToolIcon n="text" /><ToolIcon n="measure" menu />
          <Divider />
          <ToolIcon n="place" />
          <Tool><CheckLabel>DRC</CheckLabel></Tool>
          <ToolIcon n="route" /><ToolIcon n="branch" />
          <Dropdown label="Corner" value="Line 45°" $w={104} $before={2} $gap={3} />
          <Divider />
          <ToolIcon n="align" off menu /><ToolIcon n="distribute" off menu /><ToolIcon n="flipLeft" off /><ToolIcon n="flipRight" off />
          <Divider />
          <ToolIcon n="gerber" /><ToolIcon n="drill" /><ToolIcon n="cart" />
          <Tool aria-label="Settings"><Gear /></Tool>
        </Toolbar>

        <Workspace>
          <SideStrip>
            <PinButton aria-label="Pin panel"><Pin /></PinButton>
            <SideTab $h={98} $first>All Projects</SideTab>
            <SideTab $h={144} $active>Project Design</SideTab>
            <SideTab $h={142}>Commonly Library</SideTab>
            <SideTab $h={176}>Device Standardization</SideTab>
          </SideStrip>

          <Panel>
            <PanelTabs>
              <PanelTab $active>Page</PanelTab><PanelTab>Net</PanelTab><PanelTab>Component</PanelTab><PanelTab>Object</PanelTab>
            </PanelTabs>
            <SearchRow>
              <SquareButton $on aria-label="Filter"><Icon w={18} h={20} sw={1.4}><path d="M2 1H16V4L11 10V15L7 19V10L2 4ZM2 4H16" /></Icon></SquareButton>
              <SearchLabel>
                <Icon w={22} h={22} vb="0 0 22 22"><g stroke="#666"><circle cx="10" cy="10" r="8.500" /><path d="M16 16L21 21" /></g></Icon>
                <input aria-label="Search" />
              </SearchLabel>
              <SquareButton aria-label="Previous"><Chevron up /></SquareButton>
              <SquareButton aria-label="Next"><Chevron /></SquareButton>
            </SearchRow>
            <Tree>
              <TreeRow>
                <Icon w={20} h={20} vb="0 0 20 20"><g stroke="#222"><rect x="3.500" y="5" width="10" height="10" /><path d="M6 10H11" /><path d="M8.500 0V5M8.500 15V20M14 10H20" strokeDasharray="1.500 1.500" /></g></Icon>
                <Folder />
                PCB_PCB_DA2
              </TreeRow>
              <TreeRow $child>
                <Icon w={26} h={20} vb="0 0 26 20"><path d="M14 0V20M14 10H26" stroke="#222" strokeDasharray="1.500 1.500" /></Icon>
                <BoardGlyph />
                PCB_PCB_DA2_fix_2_2023-07
              </TreeRow>
            </Tree>
            <HScroll />
          </Panel>

          <Splitter><Grip aria-label="Collapse left panel"><Icon w={4} h={8}><path d="M4 0V8L0 4Z" fill="#6b6260" stroke="none" /></Icon></Grip></Splitter>

          <DocArea>
            <DocTabs>
              <DocTab $w={121}><Cloud w={20} h={17} c="#5588ff" sw={2.8} />Start Page</DocTab>
              <DocTab $w={200} $active><BoardGlyph />PCB_PCB_DA2_fix...</DocTab>
              <DocTab $w={200}><GreenTag>3D</GreenTag>PCB_PCB_DA2_fix...</DocTab>
            </DocTabs>
            <TopRuler />
            <CanvasRow><SideRuler /><BoardDrawing /></CanvasRow>
          </DocArea>

          <Splitter $edge><Grip aria-label="Collapse right panel"><Icon w={4} h={8}><path d="M0 0V8L4 4Z" fill="#6b6260" stroke="none" /></Icon></Grip></Splitter>

          <RightColumn>
            <Panel>
              <PresetRow>
                <Dropdown label="Layer preset" value="* Common(Defa..." $w={168} $gap={7} />
                <ResetButton>Reset</ResetButton>
                <ManagerButton aria-label="Layer manager">
                  <Icon w={22} h={22} sw={1.5}><path d="M5 1H21L17 7H3ZM3 7L1 9L3 11H9M3 11L1 13L3 15H9M3 15L1 17L3 19H9" /><circle cx="15.500" cy="15.500" r="4.500" strokeDasharray="2.500 1" /><circle cx="15.500" cy="15.500" r="1.500" /></Icon>
                </ManagerButton>
              </PresetRow>
              <FilterRow>
                <FilterButton $active>All</FilterButton><FilterButton>Copper</FilterButton><FilterButton>Non-Copper</FilterButton>
              </FilterRow>
              <LayerScroll>
                <LayerList>
                  {layers.map((l) => (
                    <LayerRow key={l.name}>
                      {l.group ? (
                        <Fold aria-label={`Fold ${l.name}`}>{!l.root && <Icon w={11} h={11}><path d="M11 0V11H0Z" fill="#c6c6c6" stroke="none" /></Icon>}</Fold>
                      ) : <Swatch $c={l.c} />}
                      <IconButton aria-label={`Show ${l.name}`}><Eye off={l.off} /></IconButton>
                      <LayerName $group={l.group}>{l.name}</LayerName>
                      <IconButton $low aria-label={`Lock ${l.name}`}><Lock on={l.locked} /></IconButton>
                    </LayerRow>
                  ))}
                </LayerList>
                <LayerTrack><LayerThumb /></LayerTrack>
              </LayerScroll>
            </Panel>
            <SideStrip $right>
              <PinButton $right aria-label="Pin panel"><Pin /></PinButton>
              <SideTab $right $h={91} $first $active>Layer</SideTab>
              <SideTab $right $h={90}>Filter</SideTab>
              <SideTab $right $h={89}>Property</SideTab>
            </SideStrip>
            <Status>
              {status.map(([k, v], i) => (
                <React.Fragment key={k}>
                  <StatusKey $second={i % 2}>{k}</StatusKey>
                  <StatusValue>{v}</StatusValue>
                </React.Fragment>
              ))}
            </Status>
          </RightColumn>
        </Workspace>

        <Splitter $row><Grip $row aria-label="Collapse bottom panel"><Icon w={8} h={3}><path d="M0 3H8L4 0Z" fill="#6b6260" stroke="none" /></Icon></Grip></Splitter>

        <BottomBar>
          <BottomPin aria-label="Pin panel"><Pin /></BottomPin>
          <BottomTab $w={107} $active>Library</BottomTab>
          <BottomTab $w={89}>Log</BottomTab>
          <BottomTab $w={89}>DRC</BottomTab>
          <BottomTab $w={122}>Find Result</BottomTab>
        </BottomBar>
      </Shell>
    </>
  );
}
